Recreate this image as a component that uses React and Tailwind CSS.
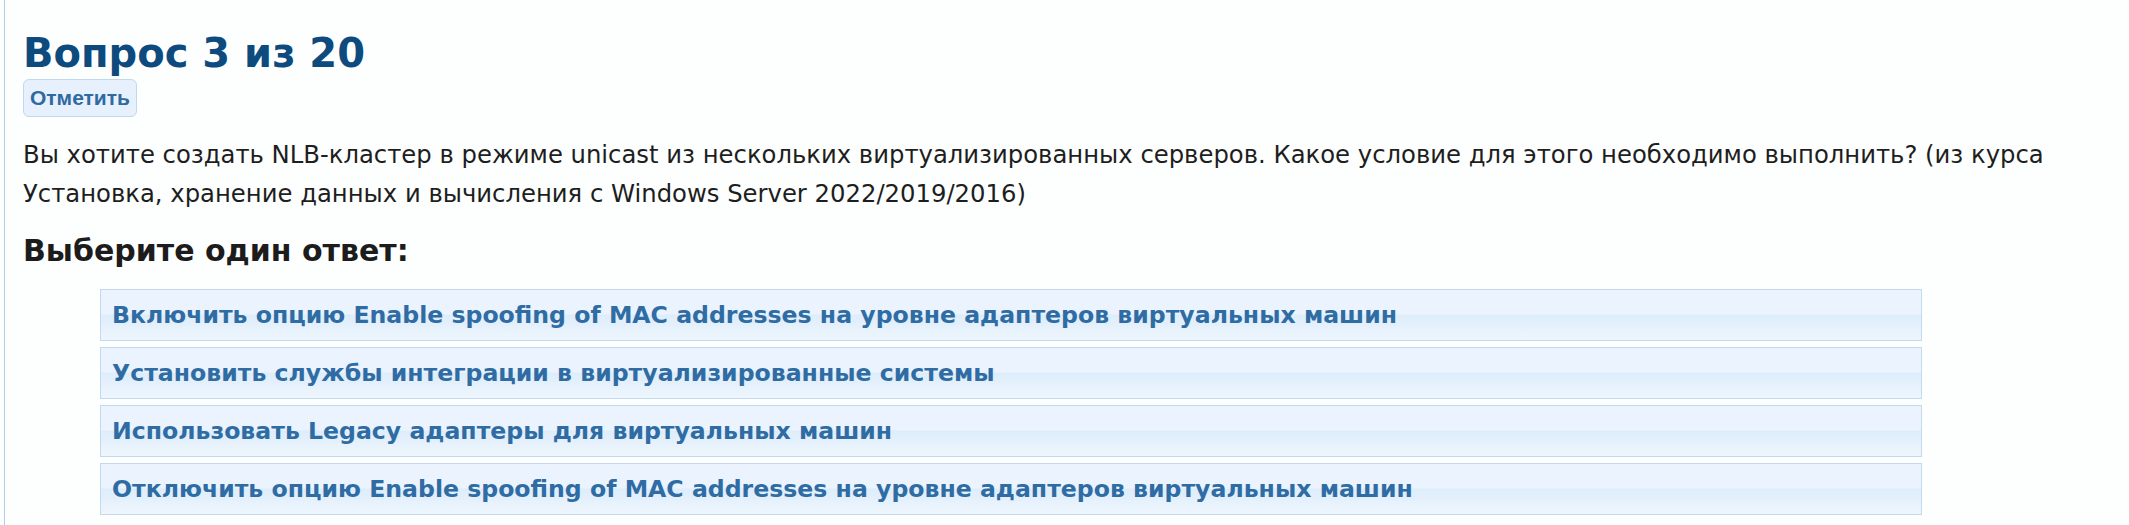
import React from "react";

const answers = [
  "Включить опцию Enable spoofing of MAC addresses на уровне адаптеров виртуальных машин",
  "Установить службы интеграции в виртуализированные системы",
  "Использовать Legacy адаптеры для виртуальных машин",
  "Отключить опцию Enable spoofing of MAC addresses на уровне адаптеров виртуальных машин",
];

function AnswerOption({ text }) {
  return (
    <div className="flex h-[52px] items-center border border-[#c3d9ed] bg-[linear-gradient(to_bottom,#ebf4fe_0%,#ebf4fe_48%,#ddedfb_50%,#eef6fd_100%)] pl-[11px] pt-[2px]">
      <span className="font-['DejaVu_Sans',sans-serif] text-[23.6px] font-bold text-[#2f6ca3]">
        {text}
      </span>
    </div>
  );
}

export default function App() {
  return (
    <div className="min-h-[525px] bg-[#fdfefe]">
      <div className="ml-[4px] min-h-[525px] border-l border-[#b3cde6] pl-[18px] pt-[30px]">
        <h2 className="font-['DejaVu_Sans',sans-serif] text-[40px] font-bold leading-[46px] text-[#0d4a7e]">
          Вопрос 3 из 20
        </h2>
        <button className="mt-[3px] h-[38px] rounded-[6px] border border-[#c2d8ee] bg-[#e7f1fd] px-[6px] font-['Liberation_Sans',sans-serif] text-[21px] font-bold text-[#2f6aa0]">
          Отметить
        </button>
        <p className="mt-[18px] font-['DejaVu_Sans',sans-serif] text-[24.3px] leading-[39px] text-[#1e1e1e]">
          Вы хотите создать NLB-кластер в режиме unicast из нескольких виртуализированных серверов. Какое условие для этого необходимо выполнить? (из курса
          <br />
          Установка, хранение данных и вычисления с Windows Server 2022/2019/2016)
        </p>
        <h3 className="mt-[20px] font-['DejaVu_Sans',sans-serif] text-[30px] font-bold leading-[36px] text-[#1c1c1c]">
          Выберите один ответ:
        </h3>
        <div className="ml-[77px] mt-[20px] flex w-[1822px] flex-col gap-[6px]">
          {answers.map((a) => (
            <AnswerOption key={a} text={a} />
          ))}
        </div>
      </div>
    </div>
  );
}
